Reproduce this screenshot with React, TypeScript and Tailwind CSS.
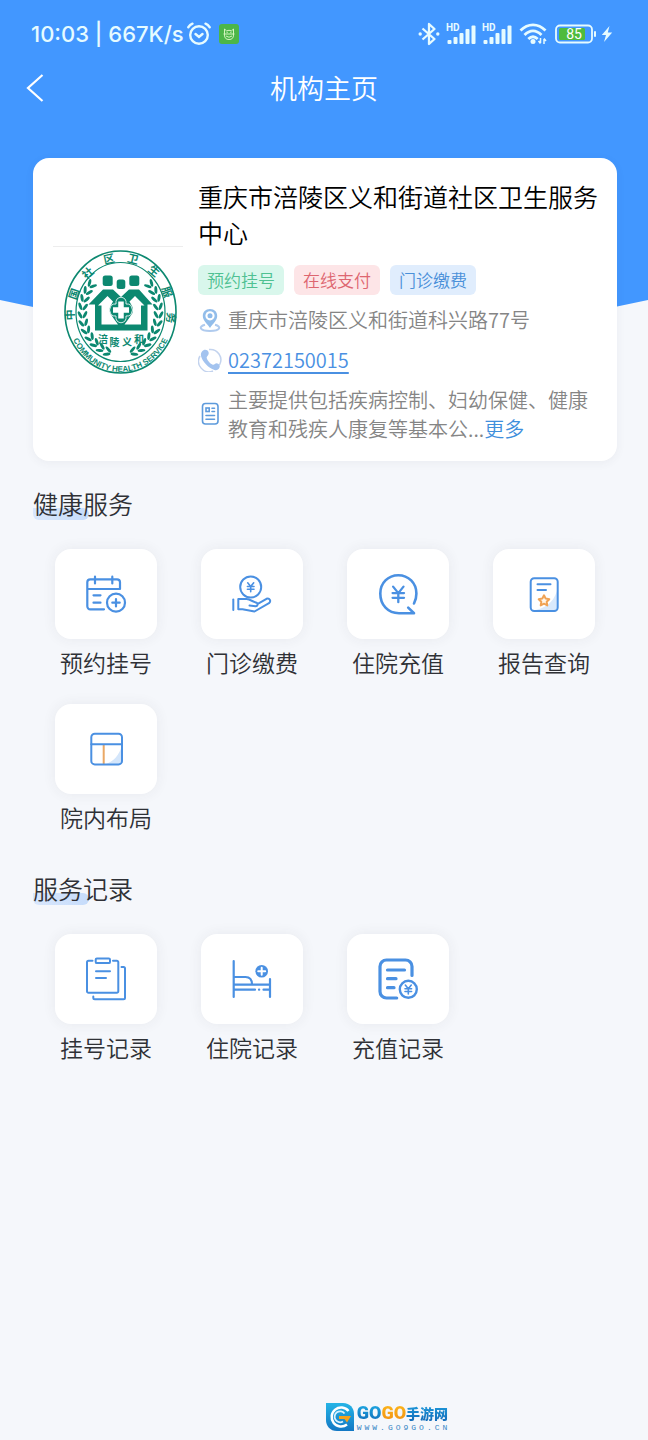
import type { ReactNode } from "react";

const BLUE = "#4a90e2";

function YenMark({ x, y, s = 1, w = 1.6 }: { x: number; y: number; s?: number; w?: number }) {
  return (
    <path
      d={`M${x - 4 * s} ${y - 6 * s}L${x} ${y - s}L${x + 4 * s} ${y - 6 * s}M${x} ${y - s}V${y + 6 * s}M${x - 4.4 * s} ${y - s}H${x + 4.4 * s}M${x - 4.4 * s} ${y + 2.6 * s}H${x + 4.4 * s}`}
      strokeWidth={w}
    />
  );
}

function TileIcon({ children, w = 2 }: { children: ReactNode; w?: number }) {
  return (
    <svg
      viewBox="0 0 48 48"
      className="size-12"
      fill="none"
      stroke={BLUE}
      strokeWidth={w}
      strokeLinecap="round"
      strokeLinejoin="round"
      aria-hidden="true"
    >
      {children}
    </svg>
  );
}

const calendarIcon = (
  <TileIcon w={2.2}>
    <path d="M22 39.300H8.300a3 3 0 0 1-3-3V12.300a3 3 0 0 1 3-3H35a3 3 0 0 1 3 3V19H5.300M13 6.700V13.500M30.300 6.700V13.500M11.500 25.300H18.500M11.500 32.700H18.500" />
    <circle cx="34" cy="32.700" r="9" />
    <path d="M34 29V36.400M30.300 32.700H37.700" />
  </TileIcon>
);

const handCoinIcon = (
  <TileIcon w={2}>
    <circle cx="22.700" cy="17" r="10.500" />
    <YenMark x={22.7} y={17.3} s={0.75} w={1.6} />
    <path d="M5.300 29.500V40" />
    <path d="M21.500 35.500L27.500 36.200C30.200 36 30.200 33 28 32.500C25.500 32.200 22 29 18.500 29H10.300V39.300H14.500L26.500 41.500L41 33.200C43.500 31 41.500 27.600 38.500 28.800L30.200 33.600" />
  </TileIcon>
);

const rechargeIcon = (
  <TileIcon w={2.6}>
    <path d="M40 33.500C41.600 30.500 42.400 27.500 42.400 23.500C42.400 13 34.500 5.200 24.300 5.200S6.300 13 6.300 23.500C6.300 35 14 43.300 25 43.300H40L34.200 37.600" />
    <YenMark x={24.3} y={24.4} s={1.3} w={2.3} />
  </TileIcon>
);

const reportIcon = (
  <TileIcon w={2}>
    <path d="M37 21V37.500a3 3 0 0 1-3 3H12C25 39 33 33 37 21Z" fill="#d9e9fc" stroke="none" />
    <rect x="10.700" y="8.300" width="27" height="32.700" rx="3.500" />
    <path d="M17.500 14.300H30.500M17.500 20H26" />
    <path
      d="M24 25.300L25.700 28.600L29.300 29.200L26.700 31.800L27.300 35.400L24 33.700L20.700 35.400L21.300 31.800L18.700 29.200L22.300 28.600Z"
      stroke="#f0a355"
      fill="#fff6ea"
    />
  </TileIcon>
);

const layoutIcon = (
  <TileIcon w={2}>
    <path d="M39.500 22V36a3 3 0 0 1-3 3H24C32 36 37 30 39.500 22Z" fill="#d4e6fb" stroke="none" />
    <path d="M21.700 20V38.500" stroke="#eaa865" />
    <rect x="9.300" y="8.700" width="30.700" height="30.700" rx="3.500" />
    <path d="M9.300 19.300H40" />
  </TileIcon>
);

const clipboardIcon = (
  <TileIcon w={2}>
    <path d="M10.500 5.700H6.500a1.500 1.500 0 0 0-1.500 1.500V36.200a1.500 1.500 0 0 0 1.500 1.500H34.800a1.500 1.500 0 0 0 1.500-1.500V7.200a1.500 1.500 0 0 0-1.500-1.500H31" />
    <rect x="13.700" y="3.500" width="14.300" height="4.600" rx="1.200" />
    <path d="M14 16.300H28M14 23H24M39.500 12H41.500a1.500 1.500 0 0 1 1.500 1.500V42.800a1.500 1.500 0 0 1-1.500 1.500H12.800a1.500 1.500 0 0 1-1.500-1.500V41.500" />
  </TileIcon>
);

const bedIcon = (
  <TileIcon w={2.2}>
    <path d="M5.700 6V42M42 24V42M5.700 29.700H42M5.700 22H17.500C22 22 24 24 24 29.500M5.700 34.700H27M31 34.700H31.200M35.500 34.700H42" />
    <circle cx="33.700" cy="16.300" r="6.300" fill={BLUE} stroke="none" />
    <path d="M33.700 12.800V19.800M30.200 16.300H37.200" stroke="#ffffff" strokeWidth="2" />
  </TileIcon>
);

const billIcon = (
  <TileIcon w={3.2}>
    <path d="M22.700 43H12.500A6.500 6.500 0 0 1 6 36.500V11.500A6.500 6.500 0 0 1 12.500 5H31.500A6.500 6.500 0 0 1 38 11.500V20.500M13.500 15H30.500M13.500 23.700H22M13.500 32.700H20" />
    <circle cx="34.300" cy="34.300" r="8.500" strokeWidth="2.400" />
    <YenMark x={34.3} y={34.5} s={0.75} w={1.6} />
  </TileIcon>
);

const services = [
  { label: "预约挂号", icon: calendarIcon },
  { label: "门诊缴费", icon: handCoinIcon },
  { label: "住院充值", icon: rechargeIcon },
  { label: "报告查询", icon: reportIcon },
  { label: "院内布局", icon: layoutIcon },
];

const records = [
  { label: "挂号记录", icon: clipboardIcon },
  { label: "住院记录", icon: bedIcon },
  { label: "充值记录", icon: billIcon },
];

function Section({ title, items }: { title: string; items: { label: string; icon: ReactNode }[] }) {
  return (
    <section>
      <h2 className="relative isolate w-fit text-[25px] leading-[34px] font-[350] text-[#2f3136]">
        <span className="absolute bottom-0 left-0 -z-10 h-3 w-14 rounded-b-lg rounded-tr-lg bg-linear-to-r from-[#d9e7fc] to-[#c6dcfb]" />
        {title}
      </h2>
      <div className="mt-[29px] grid grid-cols-4 gap-y-[26px]">
        {items.map((item) => (
          <button key={item.label} type="button" className="flex flex-col items-center gap-[7px]">
            <span className="flex h-[90px] w-[102px] items-center justify-center rounded-2xl bg-white shadow-[0_0_14px_rgba(60,60,70,0.07)]">
              {item.icon}
            </span>
            <span className="text-[23px] leading-8 font-[350] text-[#2f3136]">{item.label}</span>
          </button>
        ))}
      </div>
    </section>
  );
}

function Signal() {
  return (
    <svg viewBox="0 0 31 24" className="h-6 w-[31px]" fill="#e6fbff" aria-hidden="true">
      <text x="0" y="9" fontSize="10" fontWeight="700" fontFamily="Roboto, sans-serif">
        HD
      </text>
      <rect x="1.500" y="18" width="4" height="4" rx="1" />
      <rect x="7.500" y="15" width="4" height="7" rx="1" />
      <rect x="13.500" y="11" width="4" height="11" rx="1" />
      <rect x="19.500" y="7" width="4" height="15" rx="1" />
      <rect x="25.500" y="3.500" width="4" height="18.500" rx="1" />
    </svg>
  );
}

function StatusBar() {
  return (
    <div className="flex h-7 items-center justify-between pr-[35px] pl-[31px] text-[#e6fbff]">
      <div className="flex items-center">
        <span className="font-[Inter,sans-serif] text-[22px] leading-7 font-medium whitespace-pre">10:03 | 667K/s</span>
        <svg viewBox="0 0 24 24" className="ml-[3px] size-6" fill="none" stroke="currentColor" strokeWidth="2.400" strokeLinecap="round" aria-hidden="true">
          <circle cx="12" cy="13" r="8.800" />
          <path d="M8.500 12L12 15L15.500 12M1.300 5.200C2.500 3.500 3.700 2.500 5.500 1.700M22.700 5.200C21.500 3.500 20.300 2.500 18.500 1.700" />
        </svg>
        <svg viewBox="0 0 20 20" className="ml-2 size-5" aria-hidden="true">
          <rect width="20" height="20" rx="3" fill="#4cb648" />
          <g fill="none" stroke="#d3f5bd" strokeWidth="1">
            <path d="M5.500 5L7.500 6.800Q10 5.800 12.500 6.800L14.500 5V11Q14.500 15.500 10 15.500T5.500 11Z" />
            <path d="M4.500 10H15.500M7.500 8.300H8.800M11.200 8.300H12.500M7 12Q10 14.500 13 12" />
          </g>
        </svg>
      </div>
      <div className="flex items-center">
        <svg viewBox="0 0 22 24" className="h-6 w-[22px]" fill="none" stroke="currentColor" strokeWidth="2.300" strokeLinejoin="round" aria-hidden="true">
          <path d="M4.500 6.500L16.500 17L11 22V2L16.500 7L4.500 17.500" />
          <circle cx="2.200" cy="12" r="1.700" fill="currentColor" stroke="none" />
          <circle cx="19.800" cy="12" r="1.700" fill="currentColor" stroke="none" />
        </svg>
        <div className="ml-1.5 flex gap-[5px]">
          <Signal />
          <Signal />
        </div>
        <svg viewBox="0 0 28 24" className="ml-1.5 h-6 w-7" fill="none" stroke="currentColor" strokeWidth="2.800" aria-hidden="true">
          <path d="M1.500 8.500C9 1 19 1 26.500 8.500M5.500 13C11 7.500 17 7.500 22.500 13M9.300 17C12.500 13.800 15.500 13.800 18.700 17" />
          <circle cx="14" cy="19.500" r="2.500" fill="currentColor" stroke="none" />
          <path d="M21.500 16V21M21.500 21.500L19.500 19M25 22V17M25 16.500L27 19" strokeWidth="1.500" />
        </svg>
        <svg viewBox="0 0 42 20" className="ml-2 h-5 w-[42px]" aria-hidden="true">
          <rect x="1" y="1.500" width="36" height="17" rx="4" fill="none" stroke="#e6fbff" strokeWidth="1.800" />
          <rect x="4" y="4" width="26" height="12" rx="1.500" fill="#4fbb3d" />
          <rect x="39" y="7" width="2" height="6" rx="1" fill="#e6fbff" />
          <text x="19" y="15" textAnchor="middle" fontSize="14" fontWeight="400" fontFamily="Roboto, sans-serif" fill="#ffffff">
            85
          </text>
        </svg>
        <svg viewBox="0 0 12 18" className="ml-1 h-[18px] w-3" fill="currentColor" aria-hidden="true">
          <path d="M8.500 1L0.800 10H5L3 17L11.200 7.500H6.800Z" />
        </svg>
      </div>
    </div>
  );
}

const GREEN = "#0c8870";

const sealChars = [
  { c: "中", x: 17, y: 69, r: -92 },
  { c: "国", x: 21, y: 48, r: -70 },
  { c: "社", x: 35, y: 27, r: -42 },
  { c: "区", x: 56, y: 13, r: -12 },
  { c: "卫", x: 80, y: 13, r: 14 },
  { c: "生", x: 101, y: 25, r: 40 },
  { c: "服", x: 114, y: 46, r: 70 },
  { c: "务", x: 118, y: 72, r: 96 },
];

const leafAngles = [112, 123, 134, 145, 156, 167, 178, 189, 200, 211, 222];

function Seal() {
  return (
    <svg viewBox="0 0 130 130" className="size-[130px] shrink-0" role="img" aria-label="中国社区卫生服务">
      <path d="M0 .5H130" stroke="#ededed" />
      <g fill="none" stroke={GREEN}>
        <ellipse cx="67.500" cy="66" rx="55.500" ry="61" strokeWidth="1.600" />
        <ellipse cx="67.500" cy="66" rx="44.500" ry="49.500" strokeWidth="1.200" />
      </g>
      <g fill={GREEN} fontFamily="'Noto Sans CJK SC', sans-serif" fontWeight="700" textAnchor="middle">
        {sealChars.map((s) => (
          <text key={s.c} fontSize="11" transform={`translate(${s.x} ${s.y}) rotate(${s.r})`} y="4">
            {s.c}
          </text>
        ))}
        <text x="50" y="97" fontSize="10">涪</text>
        <text x="61.500" y="100" fontSize="10">陵</text>
        <text x="74" y="100" fontSize="10">义</text>
        <text x="86" y="97" fontSize="10">和</text>
      </g>
      <path id="seal-arc" d="M15.500 79A53 58 0 0 0 119.500 79" fill="none" />
      <text fontSize="8" fontWeight="700" fontFamily="'Liberation Sans', sans-serif" fill={GREEN} textAnchor="middle">
        <textPath href="#seal-arc" startOffset="50%">
          COMMUNITY HEALTH SERVICE
        </textPath>
      </text>
      {[1, -1].map((side) => (
        <g key={side} fill={GREEN}>
          {leafAngles.map((a) => {
            const t = (a * Math.PI) / 180;
            const x = 67.5 + side * 38 * Math.cos(t);
            const y = 66 + 42.5 * Math.sin(t);
            const turn = side * (a + 90);
            return (
              <g key={a} transform={`translate(${x} ${y}) rotate(${turn})`}>
                <ellipse cx="0" cy="2.800" rx="3.900" ry="1.500" transform={`rotate(${side * 28})`} />
                <ellipse cx="0" cy="-2.800" rx="3.900" ry="1.500" transform={`rotate(${side * -28})`} />
              </g>
            );
          })}
        </g>
      ))}
      <g fill={GREEN}>
        <rect x="49.700" y="29.500" width="10" height="10.500" rx="2.500" />
        <rect x="63.700" y="33.500" width="8.600" height="9.500" rx="2.500" />
        <rect x="76.300" y="29.500" width="10" height="10.500" rx="2.500" />
        <path d="M35.500 58.500L50 43.500H60L68 51L76 43.500H86L99.500 58.500H94.500V84.500H42V58.500Z" />
      </g>
      <path d="M48.500 78.500V59.500H45L54.500 50L60 55.500L57 61V67L61 73L65 78.500ZM88 78.500V59.500H91.500L82 50L76.500 55.500L79.500 61V67L75.500 73L71.500 78.500Z" fill="#ffffff" />
      <path
        d="M64 53Q68 49.500 72 53Q73.500 55 73 58Q76 57.500 78 59.500Q81 64 78 68.500Q76 70.500 73 70Q73.500 73 72 75Q68 78.500 64 75Q62.500 73 63 70Q60 70.500 58 68.500Q55 64 58 59.500Q60 57.500 63 58Q62.500 55 64 53Z"
        fill={GREEN}
        stroke="#ffffff"
        strokeWidth="0.800"
      />
      <path d="M68 55.500V72.500M60 64H76" stroke="#ffffff" strokeWidth="5.500" />
    </svg>
  );
}

function InfoRow({ icon, children }: { icon: ReactNode; children: ReactNode }) {
  return (
    <div className="flex items-center gap-1.5">
      <span className="size-6 shrink-0">{icon}</span>
      <div className="min-w-0 flex-1">{children}</div>
    </div>
  );
}

const pinIcon = (
  <svg viewBox="0 0 24 24" className="size-6" aria-hidden="true">
    <path d="M7 16.800C0 18.500 1.500 23 12 23S24 18.500 17 16.800" fill="none" stroke="#b0cbee" strokeWidth="2" />
    <path d="M12 1C7.500 1 4.800 4 4.800 8C4.800 12.500 9.500 16 12 20C14.500 16 19.200 12.500 19.200 8C19.200 4 16.500 1 12 1Z" fill="#92bdea" />
    <circle cx="12" cy="7.800" r="4.600" fill="#ffffff" />
    <circle cx="12" cy="7.800" r="2.500" fill="#8fbbea" />
  </svg>
);

const phoneIcon = (
  <svg viewBox="0 0 24 24" className="size-6" aria-hidden="true">
    <path d="M11 1.500A10.500 10.500 0 0 1 21.500 17" fill="none" stroke="#c3d3ee" strokeWidth="1.500" />
    <path d="M2 8A10.500 10.500 0 0 0 15 23" fill="none" stroke="#c3d3ee" strokeWidth="1.500" />
    <path d="M4 3.500C6 1 9.500 1.500 10.500 4C11.500 7 8.500 8 8.700 10C9.300 12.500 12.500 16 14.800 16.700C16.500 17 17 15.300 18.500 15.300C21 15.500 22.500 17.500 21.500 19.500C20.500 22 18.500 22.500 16.500 22C10.500 20 4.200 13.500 3 8C2.700 6 3 4.800 4 3.500Z" fill="#a3c3ef" />
  </svg>
);

const documentIcon = (
  <svg viewBox="0 0 24 24" className="size-6" fill="none" stroke="#5e9bdc" strokeWidth="1.600" strokeLinecap="round" aria-hidden="true">
    <rect x="4.500" y="1.500" width="15.500" height="20.500" rx="3" />
    <rect x="8" y="6" width="3.200" height="3.500" />
    <path d="M14 6.200H16.500M14 9.500H16.500M8 13.500H16.500M8 17.300H16.500" />
  </svg>
);

const tags = [
  { label: "预约挂号", style: "bg-[#d9f7ec] text-[#4fc192]" },
  { label: "在线支付", style: "bg-[#fde5e7] text-[#dd6670]" },
  { label: "门诊缴费", style: "bg-[#e0edfd] text-[#4a90d9]" },
];

function Watermark() {
  return (
    <footer className="mt-auto flex items-center justify-center gap-[3px] pt-10 pb-2 pl-32">
      <svg viewBox="0 0 28 30" className="h-[30px] w-7" aria-hidden="true">
        <defs>
          <linearGradient id="mark" x1="0" y1="0" x2="0" y2="1">
            <stop offset="0" stopColor="#25b4e6" />
            <stop offset="1" stopColor="#1277c4" />
          </linearGradient>
        </defs>
        <path d="M0 1H17C24 1 28 6 28 12V29H11C4 29 0 24 0 18Z" fill="url(#mark)" />
        <path d="M22.500 9A9.500 9.500 0 1 0 21 22.500" fill="none" stroke="#ffffff" strokeWidth="2.500" />
        <path d="M18.500 11.500A5.500 5.500 0 1 0 17 19.500" fill="none" stroke="#d8f1ff" strokeWidth="1.800" />
        <path d="M13 14H25L21 20.500L18.500 17H13Z" fill="#f5a21c" />
      </svg>
      <div className="flex flex-col">
        <div className="flex h-[22px] items-center">
          <span className="bg-linear-to-b from-[#22b2e8] to-[#1264b4] bg-clip-text font-[Roboto,sans-serif] text-[18px] leading-[22px] font-black text-transparent">GO</span>
          <span className="bg-linear-to-b from-[#fdbb1b] to-[#f08a12] bg-clip-text font-[Roboto,sans-serif] text-[18px] leading-[22px] font-black text-transparent">GO</span>
          <span className="bg-linear-to-b from-[#22a2e0] to-[#1264b4] bg-clip-text text-[14px] leading-[22px] font-black text-transparent">手游网</span>
        </div>
        <span className="font-['Liberation_Mono',monospace] text-[8px] leading-2 tracking-[3px] text-[#3585c4]">WWW.GO9GO.CN</span>
      </div>
    </footer>
  );
}

export default function App() {
  return (
    <div className="relative isolate flex min-h-screen flex-col bg-[#f5f7fb] pt-5 font-['Noto_Sans_CJK_SC',sans-serif]">
      <svg
        viewBox="0 0 648 340"
        preserveAspectRatio="none"
        className="absolute inset-x-0 top-0 -z-10 h-[340px] w-full"
        aria-hidden="true"
      >
        <path d="M0 0H648V300Q324 372 0 300Z" fill="#4297ff" />
      </svg>

      <StatusBar />

      <header className="mt-[18px] grid h-11 grid-cols-[64px_1fr_64px] items-center text-white">
        <button type="button" aria-label="返回" className="flex h-11 items-center pl-[25px]">
          <svg viewBox="0 0 20 30" className="h-[30px] w-5" fill="none" stroke="currentColor" strokeWidth="2.200" aria-hidden="true">
            <path d="M17.500 2L3 15L17.500 28" />
          </svg>
        </button>
        <h1 className="text-center text-[27px] leading-[44px] font-[350]">机构主页</h1>
      </header>

      <main className="mt-12 pr-[31px] pl-[33px]">
        <article className="flex items-center gap-[15px] rounded-2xl bg-white pt-5 pr-[18px] pb-[18px] pl-5 shadow-[0_2px_10px_rgba(60,70,90,0.06)]">
          <Seal />
          <div className="min-w-0 flex-1">
            <h2 className="text-[25px] leading-9 font-[350] text-black">重庆市涪陵区义和街道社区卫生服务中心</h2>
            <ul className="mt-[15px] flex flex-wrap gap-2.5">
              {tags.map((tag) => (
                <li key={tag.label} className={`rounded-md px-[9px] text-[17px] leading-[30px] font-[350] ${tag.style}`}>
                  {tag.label}
                </li>
              ))}
            </ul>
            <div className="mt-2.5 flex flex-col gap-[11px] text-[20px] leading-[29px] font-[350] text-[#858585]">
              <InfoRow icon={pinIcon}>重庆市涪陵区义和街道科兴路77号</InfoRow>
              <InfoRow icon={phoneIcon}>
                <a href="tel:02372150015" className="text-[#4a90e2] underline decoration-2 underline-offset-4">
                  02372150015
                </a>
              </InfoRow>
              <InfoRow icon={documentIcon}>
                主要提供包括疾病控制、妇幼保健、健康教育和残疾人康复等基本公...
                <button type="button" className="text-[#3f8fdc]">更多</button>
              </InfoRow>
            </div>
          </div>
        </article>

        <div className="mt-[25px] flex flex-col gap-[38px]">
          <Section title="健康服务" items={services} />
          <Section title="服务记录" items={records} />
        </div>
      </main>

      <Watermark />
    </div>
  );
}
